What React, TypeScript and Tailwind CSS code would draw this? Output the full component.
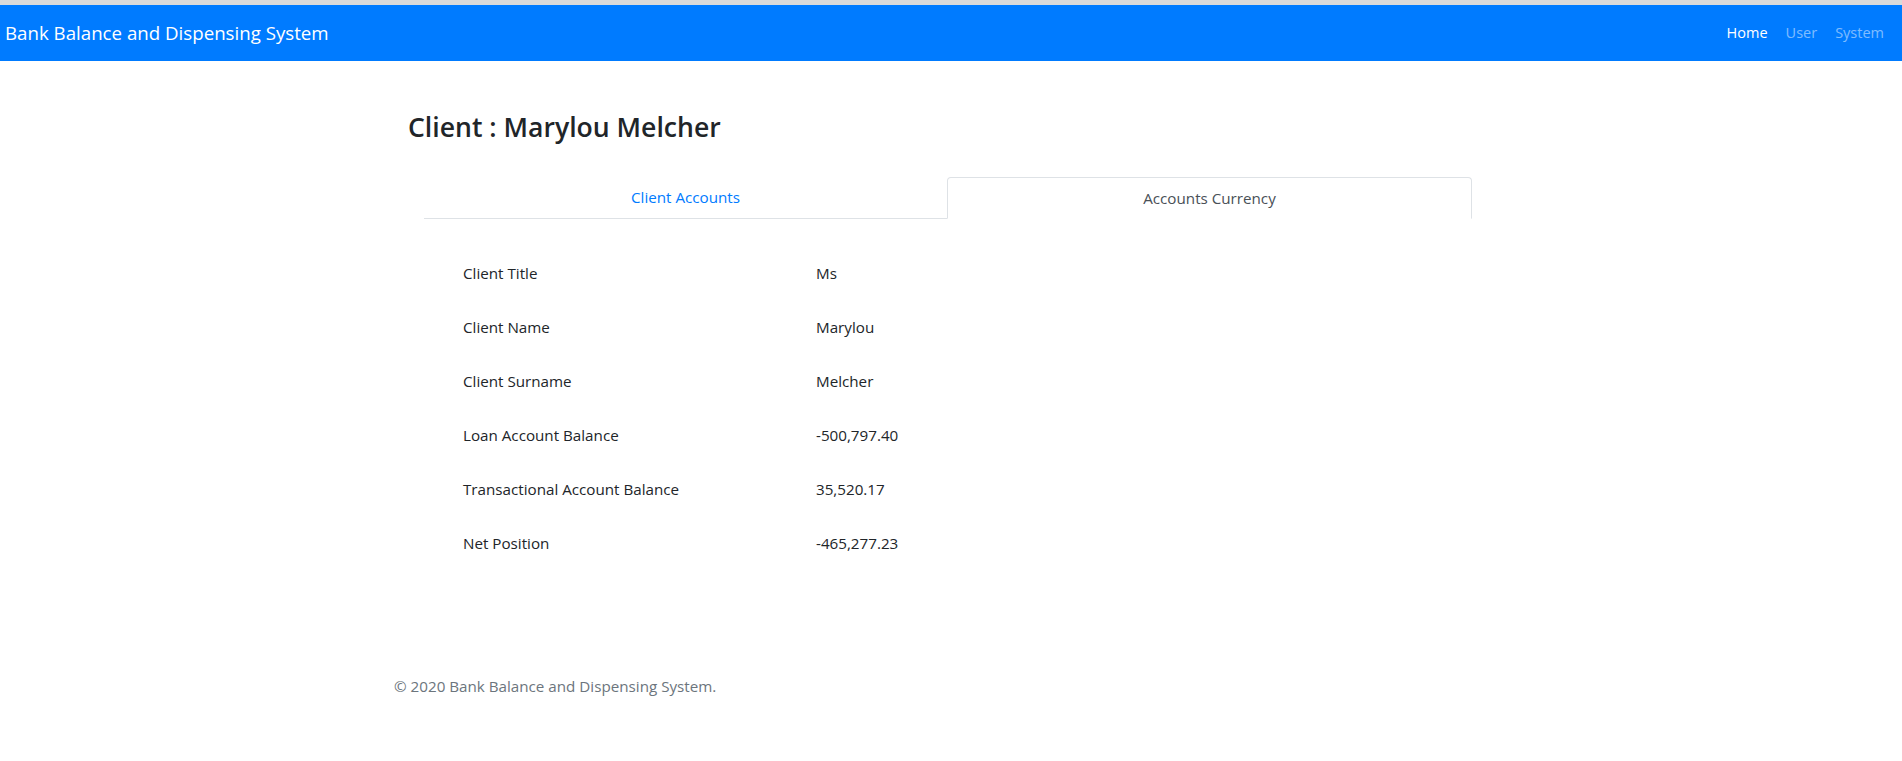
export default function App() {
  const rows: [string, string][] = [
    ["Client Title", "Ms"],
    ["Client Name", "Marylou"],
    ["Client Surname", "Melcher"],
    ["Loan Account Balance", "-500,797.40"],
    ["Transactional Account Balance", "35,520.17"],
    ["Net Position", "-465,277.23"],
  ];
  return (
    <div className="min-h-screen bg-white font-['Open_Sans',sans-serif] text-[#212529]">
      <div className="h-[5px] bg-[#dadada]" />
      <nav className="flex h-[56px] items-center justify-between bg-[#007bff] pl-[5px] pr-[18px]">
        <span className="text-[18.7px] text-white">Bank Balance and Dispensing System</span>
        <div className="flex gap-[18px] text-[14.5px]">
          <a className="text-white">Home</a>
          <a className="text-white/50">User</a>
          <a className="text-white/50">System</a>
        </div>
      </nav>
      <main className="mx-auto w-[1110px]">
        <h3 className="mt-[51px] pl-[12px] text-[26.6px] font-semibold leading-[1.2]">Client : Marylou Melcher</h3>
        <div className="ml-[28px] mt-[33px] flex w-[1048px] border-b border-[#dee2e6] text-[15.2px]">
          <div className="flex h-[41px] flex-1 items-center justify-center text-[#007bff]">Client Accounts</div>
          <div className="-mb-px flex h-[42px] flex-1 items-center justify-center rounded-t-[4px] border border-b-white border-[#dee2e6] bg-white text-[#495057]">
            Accounts Currency
          </div>
        </div>
        <div className="ml-[67px] mt-[27px] text-[15.2px]">
          {rows.map(([k, v]) => (
            <div key={k} className="flex h-[54px] items-center">
              <div className="w-[353px]">{k}</div>
              <div>{v}</div>
            </div>
          ))}
        </div>
        <footer className="-ml-[2px] mt-[105px] text-[15.2px] text-[#6c757d]">© 2020 Bank Balance and Dispensing System.</footer>
      </main>
    </div>
  );
}
